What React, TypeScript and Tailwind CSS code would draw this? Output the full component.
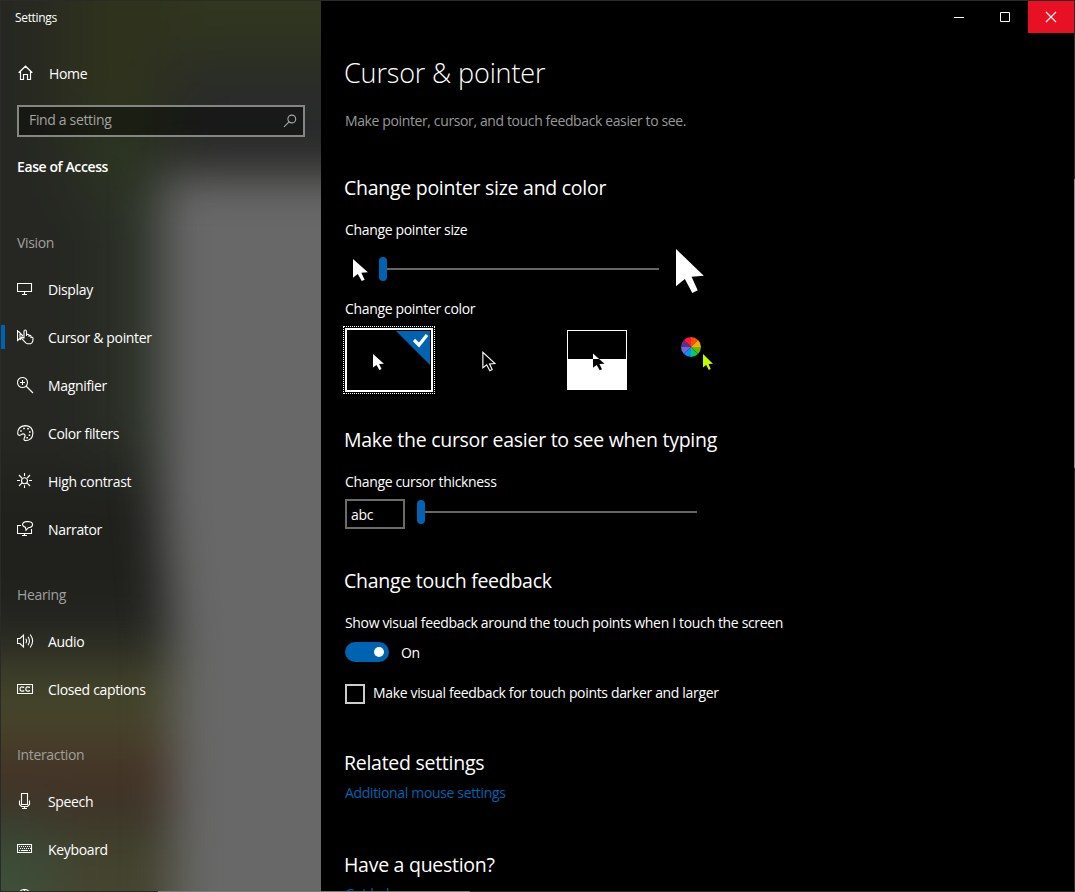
import React, { ReactNode } from "react";

const ARROW = "M0 0V37.3L8.7 30L16 44L21.3 41.3L15.3 27.7L27.3 26.7Z";

function Arrow({ className, fill = "#fff", stroke }: { className: string; fill?: string; stroke?: string }) {
  return (
    <svg viewBox={stroke ? "-2 -3 32 50" : "0 0 27.5 44"} preserveAspectRatio="none" className={className}>
      <path d={ARROW} fill={fill} stroke={stroke} strokeWidth={stroke ? 2.6 : 0} />
    </svg>
  );
}

function Backdrop() {
  return (
    <svg className="absolute inset-0 h-full w-full" viewBox="0 0 320 890" preserveAspectRatio="none">
      <defs>
        <filter id="wide" x="-200" y="-200" width="720" height="1290" filterUnits="userSpaceOnUse" colorInterpolationFilters="sRGB">
          <feGaussianBlur stdDeviation="30" />
        </filter>
        <filter id="edge" x="-100" y="-100" width="620" height="1200" filterUnits="userSpaceOnUse" colorInterpolationFilters="sRGB">
          <feGaussianBlur stdDeviation="23" />
        </filter>
      </defs>
      <rect width="320" height="890" fill="#262722" />
      <g filter="url(#wide)">
        <rect x="-200" y="-200" width="720" height="1290" fill="#262722" />
        <rect x="60" y="-100" width="110" height="230" fill="#2f321d" />
        <rect x="170" y="-100" width="350" height="160" fill="#303620" />
        <rect x="180" y="78" width="340" height="80" fill="#2a2b2d" />
        <ellipse cx="118" cy="160" rx="40" ry="50" fill="#2c3722" />
        <rect x="110" y="180" width="70" height="280" fill="#2d3529" />
        <rect x="-200" y="470" width="370" height="150" fill="#20211d" />
        <rect x="-200" y="660" width="720" height="80" fill="#45462b" />
        <rect x="-200" y="740" width="720" height="66" fill="#473427" />
        <rect x="-200" y="822" width="250" height="270" fill="#3d4f39" />
        <rect x="50" y="822" width="470" height="270" fill="#45442f" />
      </g>
      <g filter="url(#edge)">
        <path d="M160 174H460V1050H172V640L160 500Z" fill="#686868" />
      </g>
    </svg>
  );
}

const icons: Record<string, ReactNode> = {
  display: <path d="M.5 2.5H14.5V10.5H.5ZM7.5 10.5V13M5 13.5H10" />,
  cursor: (
    <>
      <path d="M.5 1V11.5L3 9.3L5 8.5M.5 1.5L6 7M3 5V8.5M5 7.5L3 11" />
      <path d="M7 9.5V2.2Q7.2 1 8.2 1Q9.3 1 9.5 2.2V7M9.5 7V5.5Q12 5 12 6.5V8M12 6.5Q14 6 14 7.5V8.5Q16.3 7.5 16 10Q16 14 13.5 14.7H10.5Q8.8 14.5 7.8 12.8L4.8 9.6Q5 8 6.2 8.5L7 9.5" />
    </>
  ),
  magnifier: <path d="M5.5 .5A5 5 0 1 0 5.5 10.5A5 5 0 0 0 5.5 .5ZM9 9L16 16M5.5 3V8M3 5.5H8" />,
  palette: (
    <>
      <path d="M8 .6Q15.5 .8 15.9 8Q15.6 15.6 8.4 15.6Q6.2 15.2 7.3 13Q9 10.3 7.2 9.1Q5.8 8.5 4.2 9.6Q1.5 11.5 .7 8.5Q.6 1.3 8 .6Z" />
      <path d="M3.2 6H4.8M6.2 3.5H7.8M10.2 3.8H11.8M12 7H13.6M11.6 10.2H13.2M9.4 12.8H11" strokeWidth="1.6" />
    </>
  ),
  contrast: <path d="M7.5 4.7A3 3 0 1 0 7.5 10.7A3 3 0 0 0 7.5 4.7ZM7.5 0V3M7.5 12.2V15M0 7.5H3M12 7.5H15M2 2L4.8 5M13 2L10.2 5M2 13L4.8 10.2M13 13L10.2 10.2" />,
  narrator: (
    <>
      <path d="M4 4.5H.5V12.5H14.5V8M7.5 12.5V14.5M5 14.5H10" />
      <path d="M8.5 6.4Q5.5 5.5 5.5 3.6Q6 .6 10.7 .5Q15.5 .7 15.6 3.6Q15.3 6.5 11.3 6.7L9 9.2Z" />
    </>
  ),
  audio: <path d="M.5 5.5H3L6.5 2V14L3 10.5H.5ZM8.8 5.7Q10.3 8 8.8 10.3M11 3.7Q13.8 8 11 12.3M13.2 1.5Q18 8 13.2 14.5" />,
  captions: (
    <>
      <path d="M.5 3.5H15.5V12.5H.5Z" />
      <path d="M7.2 6.4Q3 4.7 3 8Q3 11.3 7.2 9.6M13 6.4Q8.8 4.7 8.8 8Q8.8 11.3 13 9.6" strokeWidth="1.2" />
    </>
  ),
  speech: <path d="M4.5 .5H10.5V11.5H4.5ZM2.5 7.5V11.5L4.5 13.5H10.5L12.5 11.5V7.5M7.5 13.5V15.5M5 15.5H10" />,
  keyboard: (
    <>
      <path d="M.5 3.5H14.5V11.5H.5Z" />
      <path d="M2 5.5H13M3 7.5H14" strokeDasharray="1 1" />
      <path d="M2 9.5H3M4 9.5H11M12 9.5H13" />
    </>
  ),
  mouse: <path d="M2.5 12V4Q3 .5 7.5 .5Q12 .5 12.5 4V12M7.5 .5V6M2.5 6H12.5" />,
};

function NavItem({ icon, label, active }: { icon: string; label: string; active?: boolean }) {
  return (
    <div className="flex h-12 shrink-0">
      <div className={`mt-[11px] h-6 w-1 ${active ? "bg-[#0063b1]" : ""}`} />
      <svg viewBox="0 0 18 18" className="mt-[15px] ml-3 size-[18px]" fill="none" stroke="#fff" strokeWidth="1.1">
        {icons[icon]}
      </svg>
      <span className="mt-[14px] ml-[13px] leading-5">{label}</span>
    </div>
  );
}

function Group({ title }: { title: string }) {
  return <div className="mb-[13px] h-5 shrink-0 pl-4 leading-5 text-[#a0a09e]">{title}</div>;
}

function Sidebar() {
  return (
    <aside className="relative h-[890px] w-80 shrink-0 overflow-hidden">
      <Backdrop />
      <div className="relative flex h-full flex-col">
        <div className="h-8 shrink-0 pt-2 pl-[14px] text-[12px] leading-[18px]">Settings</div>
        <div className="mt-4 flex h-12 shrink-0 items-center">
          <svg viewBox="0 0 16 16" className="ml-[17px] size-4" fill="none" stroke="#fff" strokeWidth="1.2">
            <path d="M.7 7.8L7.5 1.2L14.3 7.8M2.5 6.5V14.5H5.5V9.5H9.5V14.5H12.5V6.5" />
          </svg>
          <span className="ml-[15px] pt-0.5 leading-5">Home</span>
        </div>
        <div className="mt-2 ml-4 flex h-8 w-72 shrink-0 items-center justify-between border-2 border-[#858582] bg-black/40 pr-1.5 pl-[10px]">
          <span className="pb-0.5 leading-5 text-[#a2a2a0]">Find a setting</span>
          <svg viewBox="0 0 14 14" className="size-[14px]" fill="none" stroke="#a8a8a6" strokeWidth="1.1">
            <circle cx="8.8" cy="5" r="3.9" />
            <path d="M6 7.8L1 12.8" />
          </svg>
        </div>
        <div className="mt-5 h-5 shrink-0 pl-4 leading-5 font-semibold tracking-[-0.4px]">Ease of Access</div>
        <div className="h-14 shrink-0" />
        <Group title="Vision" />
        <NavItem icon="display" label="Display" />
        <NavItem icon="cursor" label="Cursor & pointer" active />
        <NavItem icon="magnifier" label="Magnifier" />
        <NavItem icon="palette" label="Color filters" />
        <NavItem icon="contrast" label="High contrast" />
        <NavItem icon="narrator" label="Narrator" />
        <div className="h-[31px] shrink-0" />
        <Group title="Hearing" />
        <NavItem icon="audio" label="Audio" />
        <NavItem icon="captions" label="Closed captions" />
        <div className="h-[31px] shrink-0" />
        <Group title="Interaction" />
        <NavItem icon="speech" label="Speech" />
        <NavItem icon="keyboard" label="Keyboard" />
        <NavItem icon="mouse" label="Mouse" />
      </div>
    </aside>
  );
}

function Slider() {
  return (
    <div className="flex h-6 w-[280px] items-center">
      <div className="h-6 w-2 rounded-full bg-[#0063b1]" />
      <div className="h-0.5 flex-1 bg-[#666]" />
    </div>
  );
}

function H2({ children, className }: { children: ReactNode; className: string }) {
  return (
    <h2 className={`-ml-px h-7 text-[19.5px] leading-[30px] tracking-[-0.27px] whitespace-nowrap ${className}`}>
      {children}
    </h2>
  );
}

const wheel = ["#ff4e00", "#ffa800", "#6bb700", "#00cc6a", "#0091ff", "#6b69d6", "#5c2e91", "#ff1744"];

function ColorWheel() {
  const point = (i: number) => {
    const a = (i * Math.PI) / 4 - Math.PI / 2;
    return `${10 + 10 * Math.cos(a)} ${10 + 10 * Math.sin(a)}`;
  };
  return (
    <svg viewBox="0 0 20 20" className="size-5">
      {wheel.map((c, i) => (
        <path key={c} d={`M10 10L${point(i)}A10 10 0 0 1 ${point(i + 1)}Z`} fill={c} />
      ))}
    </svg>
  );
}

function Swatches() {
  return (
    <div className="-ml-0.5 flex h-[68px]">
      <div className="h-[68px] w-[92px] border border-dotted border-white p-px">
        <div className="relative h-16 w-[88px] border-2 border-white">
          <svg viewBox="0 0 84 60" className="absolute inset-0 h-[60px] w-[84px]">
            <path d="M49 1H83V35Z" fill="#0063b1" />
            <path d="M67 10L72 15L80 5" fill="none" stroke="#fff" strokeWidth="3.2" />
          </svg>
          <Arrow className="mt-6 ml-[26px] h-4 w-[11px]" />
        </div>
      </div>
      <Arrow className="mt-[25px] ml-[47px] h-[21px] w-[14px]" fill="#000" stroke="#fff" />
      <div className="mt-1 ml-[71px] h-[60px] w-[60px] border border-white">
        <svg viewBox="0 0 58 58" className="size-[58px]">
          <rect y="28" width="58" height="30" fill="#fff" />
          <g transform="translate(25 22.5) scale(.42 .38)">
            <path d={ARROW} fill="#000" />
            <path d="M0 0V14.5H14.5Z" fill="#fff" />
          </g>
        </svg>
      </div>
      <div className="mt-[11px] ml-[54px]"><ColorWheel /></div>
      <Arrow className="mt-7 ml-[2px] h-4 w-[10px]" fill="#bfff00" />
    </div>
  );
}

function Content() {
  return (
    <main className="flex h-[890px] w-[753px] shrink-0 flex-col overflow-hidden bg-black">
      <div className="flex h-8 shrink-0 justify-end">
        <svg viewBox="0 0 138 32" className="h-8 w-[138px]" fill="none" stroke="#fff">
          <rect x="92" width="46" height="32" fill="#e81123" stroke="none" />
          <path d="M18 16.5H28M64.5 11.5H73.5V20.5H64.5Z" />
          <path d="M110 11L120 21M120 11L110 21" strokeWidth="1.1" />
        </svg>
      </div>
      <div className="flex flex-col pl-6 [&>*]:shrink-0">
        <h1 className="mt-[21px] -ml-px h-9 text-[27px] leading-[38px] tracking-[-0.15px] [font-weight:350]">Cursor &amp; pointer</h1>
        <p className="mt-[21px] h-5 leading-5 tracking-[-0.38px] text-[#999]">Make pointer, cursor, and touch feedback easier to see.</p>
        <H2 className="mt-[42px]">Change pointer size and color</H2>
        <p className="mt-[19px] h-5 leading-5">Change pointer size</p>
        <div className="mt-2 flex h-12">
          <Arrow className="mt-[11px] ml-[8px] h-[22px] w-[15px]" />
          <div className="mt-[9px] ml-[11px]"><Slider /></div>
          <Arrow className="mt-[1px] ml-[17px] h-11 w-7" />
        </div>
        <p className="mt-[3px] h-5 leading-5">Change pointer color</p>
        <div className="mt-[7px]"><Swatches /></div>
        <H2 className="mt-[31px]">Make the cursor easier to see when typing</H2>
        <p className="mt-[19px] h-5 leading-5">Change cursor thickness</p>
        <div className="mt-[7px] flex h-[30px]">
          <div className="h-[30px] w-[60px] border-2 border-[#6b6b6b] pt-1 pl-1 leading-5">abc</div>
          <div className="mt-px ml-3"><Slider /></div>
        </div>
        <H2 className="mt-[37px]">Change touch feedback</H2>
        <p className="mt-[19px] h-5 leading-5">Show visual feedback around the touch points when I touch the screen</p>
        <div className="mt-[9px] flex h-5">
          <div className="flex h-5 w-11 items-center justify-end rounded-full bg-[#0063b1] pr-[5px]">
            <div className="size-[10px] rounded-full bg-white" />
          </div>
          <span className="mt-px ml-3 leading-5">On</span>
        </div>
        <div className="mt-[22px] flex h-5">
          <div className="size-5 border-2 border-[#ccc]" />
          <span className="-mt-px ml-2 leading-5">Make visual feedback for touch points darker and larger</span>
        </div>
        <H2 className="mt-11">Related settings</H2>
        <p className="mt-[7px] h-5 leading-5 text-[#0063b1]">Additional mouse settings</p>
        <H2 className="mt-[47px]">Have a question?</H2>
        <p className="mt-[6px] h-5 leading-5 text-[#0063b1]">Get help</p>
      </div>
    </main>
  );
}

export default function App() {
  return (
    <div className="h-[892px] w-[1075px] overflow-hidden bg-[#2a2a27] pt-px pl-px font-['Open_Sans',sans-serif] text-[14px] tracking-[-0.34px] whitespace-nowrap text-white">
      <div className="flex">
        <Sidebar />
        <Content />
        <div className="h-[890px] w-px shrink-0 pt-[178px]">
          <div className="h-[289px] w-px bg-[#8a8a8a]" />
        </div>
      </div>
      <div className="ml-[157px] h-px w-[312px] bg-[#7a7a7a]" />
    </div>
  );
}
